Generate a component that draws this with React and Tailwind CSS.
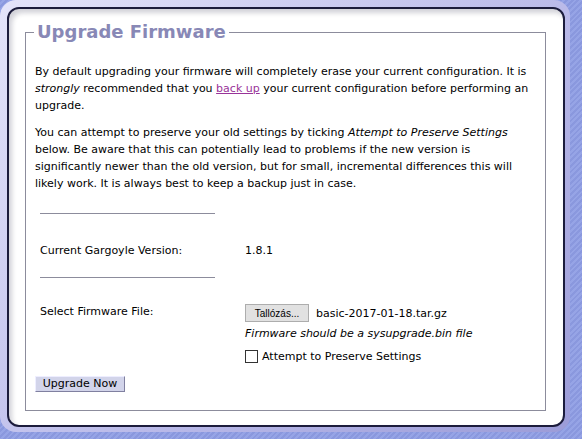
export default function App() {
  return (
    <div className="w-[582px] h-[439px] overflow-hidden bg-[repeating-linear-gradient(135deg,#8a98de_0px,#8a98de_2px,#96a4e6_2px,#96a4e6_4px)] font-['DejaVu_Sans',Verdana,sans-serif] text-[11px] text-black">
      <div className="w-[570px] h-[432px] rounded-[16px] bg-[linear-gradient(135deg,#e4e4fa,#b8b8e8_60%,#9c9cd8)] pt-[7px] pl-[7px] pr-[5px] pb-[5px]">
        <div className="h-full rounded-[12px] border-2 border-[#1c1c3c] bg-white shadow-[inset_3px_4px_5px_rgba(0,0,40,0.18)] pt-[11px] pl-[16px] pr-[17px]">
          <fieldset className="h-[391px] border border-[#8c8c9c]">
            <legend className="ml-[8px] px-[3px] text-[18px] leading-[24px] font-bold text-[#8888b6]">
              Upgrade Firmware
            </legend>
            <div className="px-[9px] pt-[19px] leading-[17px]">
              <p>
                By default upgrading your firmware will completely erase your current configuration. It is{' '}
                <em>strongly</em> recommended that you{' '}
                <a href="#" className="text-[#993399] underline">back up</a> your current configuration before
                performing an upgrade.
              </p>
              <p className="mt-[10px]">
                You can attempt to preserve your old settings by ticking <em>Attempt to Preserve Settings</em> below. Be
                aware that this can potentially lead to problems if the new version is significantly newer than the old
                version, but for small, incremental differences this will likely work. It is always best to keep a backup
                just in case.
              </p>

              <div className="ml-[5px] mt-[21px] h-px w-[175px] bg-[#8c8c9c]" />
              <div className="mt-[28px] flex">
                <div className="w-[210px] pl-[5px]">Current Gargoyle Version:</div>
                <div>1.8.1</div>
              </div>
              <div className="ml-[5px] mt-[18px] h-px w-[175px] bg-[#8c8c9c]" />

              <div className="mt-[25px] flex">
                <div className="w-[210px] pl-[5px]">Select Firmware File:</div>
                <div>
                  <div className="mt-[1px] flex items-center">
                    <span className="flex h-[18px] w-[64px] items-center justify-center border border-[#adadad] bg-[#e1e1e1] font-['Liberation_Sans',Arial,sans-serif] text-[10px]">
                      Tallózás...
                    </span>
                    <span className="ml-[7px]">basic-2017-01-18.tar.gz</span>
                  </div>
                  <div className="mt-[3px] italic">Firmware should be a sysupgrade.bin file</div>
                  <div className="mt-[6px] flex items-center">
                    <span className="h-[13px] w-[13px] border border-[#333] bg-white" />
                    <span className="ml-[4px]">Attempt to Preserve Settings</span>
                  </div>
                </div>
              </div>

              <button className="mt-[11px] h-[16px] w-[90px] border border-t-[#eeeeff] border-l-[#eeeeff] border-r-[#8080a0] border-b-[#8080a0] bg-[#d2d4ea] text-[11px] leading-[14px]">
                Upgrade Now
              </button>
            </div>
          </fieldset>
        </div>
      </div>
    </div>
  );
}
